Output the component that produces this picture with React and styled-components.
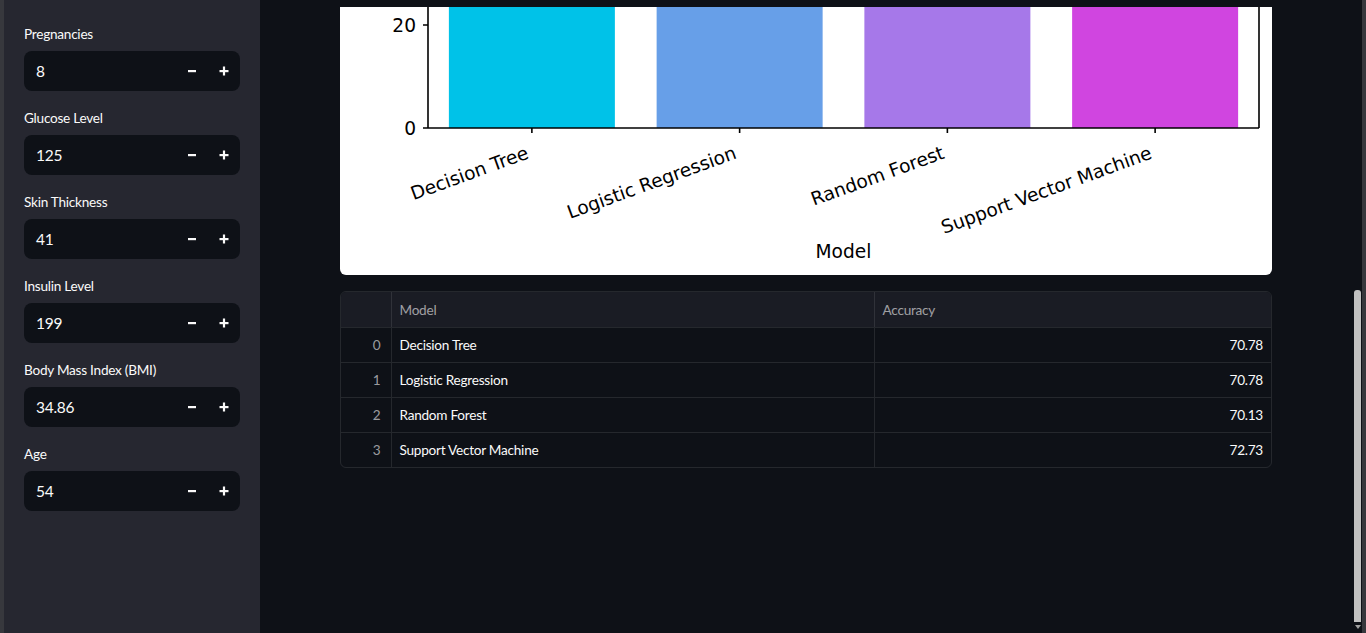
import styled, { createGlobalStyle } from "styled-components";

const GlobalStyle = createGlobalStyle`
  html, body {
    margin: 0;
    padding: 0;
    background: #0e1117;
    overflow: hidden;
  }
  * {
    box-sizing: border-box;
  }
`;

const fontStack = `"Lato", "Source Sans Pro", "Noto Sans", sans-serif`;

const inputs = [
  { label: "Pregnancies", value: "8" },
  { label: "Glucose Level", value: "125" },
  { label: "Skin Thickness", value: "41" },
  { label: "Insulin Level", value: "199" },
  { label: "Body Mass Index (BMI)", value: "34.86" },
  { label: "Age", value: "54" },
];

const models = [
  { name: "Decision Tree", accuracy: "70.78", color: "#00c2e8" },
  { name: "Logistic Regression", accuracy: "70.78", color: "#679fe8" },
  { name: "Random Forest", accuracy: "70.13", color: "#a678e9" },
  { name: "Support Vector Machine", accuracy: "72.73", color: "#d045e0" },
];

const Shell = styled.div`
  display: flex;
  width: 100vw;
  height: 100vh;
  font-family: ${fontStack};
  color: #fafafa;
`;

const WindowEdge = styled.div`
  width: ${(p) => p.$width}px;
  flex-shrink: 0;
  background: #37383d;
`;

const Sidebar = styled.aside`
  width: 256px;
  flex-shrink: 0;
  background: #262730;
  padding: 24px 20px 0 20px;
  display: flex;
  flex-direction: column;
  gap: 17px;
`;

const Field = styled.div`
  display: flex;
  flex-direction: column;
  gap: 6px;
`;

const Label = styled.label`
  font-size: 13.6px;
  letter-spacing: -0.25px;
  line-height: 21px;
  color: #fafafa;
`;

const NumberBox = styled.div`
  height: 40px;
  border-radius: 8px;
  background: #0e1117;
  display: flex;
  align-items: center;
  padding-left: 12px;
`;

const Value = styled.span`
  flex: 1;
  font-size: 15.5px;
  letter-spacing: -0.3px;
  color: #fafafa;
`;

const StepButton = styled.button`
  width: 32px;
  height: 40px;
  border: none;
  background: transparent;
  padding: 0;
  display: flex;
  align-items: center;
  justify-content: center;
  cursor: pointer;
`;

const Main = styled.main`
  flex: 1;
  min-width: 0;
  padding: 7px 78px 0 80px;
  display: flex;
  flex-direction: column;
  gap: 16px;
`;

const ChartCard = styled.div`
  background: #ffffff;
  border-radius: 0 0 6px 6px;
  overflow: hidden;
  height: 268px;
`;

const TableFrame = styled.div`
  border: 1px solid rgba(250, 250, 250, 0.1);
  border-radius: 6px;
  overflow: hidden;
`;

const Table = styled.table`
  width: 100%;
  border-collapse: collapse;
  font-size: 13.6px;
  letter-spacing: -0.25px;
`;

const HeadCell = styled.th`
  height: 35px;
  padding: 1px 8px 0 8px;
  background: #1a1c24;
  color: rgba(250, 250, 250, 0.6);
  font-weight: 400;
  text-align: left;
  border-bottom: 1px solid rgba(250, 250, 250, 0.1);
  border-left: ${(p) => (p.$first ? "none" : "1px solid rgba(250, 250, 250, 0.1)")};
  width: ${(p) => p.$width || "auto"};
`;

const Cell = styled.td`
  height: 35px;
  padding: 0 ${(p) => (p.$index ? "10px" : "8px")};
  text-align: ${(p) => (p.$right ? "right" : "left")};
  color: ${(p) => (p.$index ? "rgba(250, 250, 250, 0.6)" : "#fafafa")};
  border-top: 1px solid rgba(250, 250, 250, 0.1);
  border-left: ${(p) => (p.$index ? "none" : "1px solid rgba(250, 250, 250, 0.1)")};
`;

const ScrollTrack = styled.div`
  width: 12px;
  flex-shrink: 0;
  padding: 290px 0 4px 4px;
  display: flex;
  flex-direction: column;
  align-items: stretch;
`;

const ScrollThumb = styled.div`
  height: 333px;
  width: 7px;
  background: #c1c1c1;
  border-radius: 3px 3px 0 0;
`;

const ScrollArrow = styled.div`
  width: 0;
  height: 0;
  margin: 3px 0 0 1px;
  border-left: 3px solid transparent;
  border-right: 3px solid transparent;
  border-top: 4px solid #a0a0a0;
`;

function MinusIcon() {
  return (
    <svg width="12" height="12" viewBox="0 0 12 12">
      <rect x="2" y="5" width="8" height="2.2" fill="#fafafa" />
    </svg>
  );
}

function PlusIcon() {
  return (
    <svg width="12" height="12" viewBox="0 0 12 12">
      <rect x="1.5" y="5" width="9" height="2.2" fill="#fafafa" />
      <rect x="4.9" y="1.5" width="2.2" height="9" fill="#fafafa" />
    </svg>
  );
}

function AccuracyChart() {
  const left = 88;
  const right = 919;
  const base = 121;
  const slot = (right - left) / 4;
  const barWidth = 166;
  const textStyle = { fontFamily: '"DejaVu Sans", sans-serif', fontSize: 18.6, fill: "#000" };

  return (
    <svg width="932" height="268" viewBox="0 0 932 268">
      {models.map((m, i) => {
        const cx = left + slot * (i + 0.5);
        return (
          <g key={m.name}>
            <rect x={cx - barWidth / 2} y={-10} width={barWidth} height={base + 10} fill={m.color} />
            <line x1={cx} y1={base} x2={cx} y2={base + 5} stroke="#000" strokeWidth="1.6" />
            <text
              x={cx - 2}
              y={151}
              textAnchor="end"
              transform={`rotate(-20 ${cx - 2} 151)`}
              style={textStyle}
            >
              {m.name}
            </text>
          </g>
        );
      })}
      <line x1={left} y1={-2} x2={left} y2={base} stroke="#000" strokeWidth="1.6" />
      <line x1={right} y1={-2} x2={right} y2={base} stroke="#000" strokeWidth="1.6" />
      <line x1={left} y1={base} x2={right} y2={base} stroke="#000" strokeWidth="1.6" />
      <line x1={left - 5} y1={base} x2={left} y2={base} stroke="#000" strokeWidth="1.6" />
      <line x1={left - 5} y1={18} x2={left} y2={18} stroke="#000" strokeWidth="1.6" />
      <text x={76} y={base} textAnchor="end" dominantBaseline="central" style={textStyle}>
        0
      </text>
      <text x={76} y={18} textAnchor="end" dominantBaseline="central" style={textStyle}>
        20
      </text>
      <text x={(left + right) / 2} y={251} textAnchor="middle" style={textStyle}>
        Model
      </text>
    </svg>
  );
}

export default function App() {
  return (
    <Shell>
      <GlobalStyle />
      <WindowEdge $width={4} />
      <Sidebar>
        {inputs.map((f) => (
          <Field key={f.label}>
            <Label>{f.label}</Label>
            <NumberBox>
              <Value>{f.value}</Value>
              <StepButton aria-label="decrement">
                <MinusIcon />
              </StepButton>
              <StepButton aria-label="increment">
                <PlusIcon />
              </StepButton>
            </NumberBox>
          </Field>
        ))}
      </Sidebar>
      <Main>
        <ChartCard>
          <AccuracyChart />
        </ChartCard>
        <TableFrame>
          <Table>
            <thead>
              <tr>
                <HeadCell $first $width="50px"></HeadCell>
                <HeadCell $width="483px">Model</HeadCell>
                <HeadCell>Accuracy</HeadCell>
              </tr>
            </thead>
            <tbody>
              {models.map((m, i) => (
                <tr key={m.name}>
                  <Cell $index $right>
                    {i}
                  </Cell>
                  <Cell>{m.name}</Cell>
                  <Cell $right>{m.accuracy}</Cell>
                </tr>
              ))}
            </tbody>
          </Table>
        </TableFrame>
      </Main>
      <ScrollTrack>
        <ScrollThumb />
        <ScrollArrow />
      </ScrollTrack>
      <WindowEdge $width={4} />
    </Shell>
  );
}
